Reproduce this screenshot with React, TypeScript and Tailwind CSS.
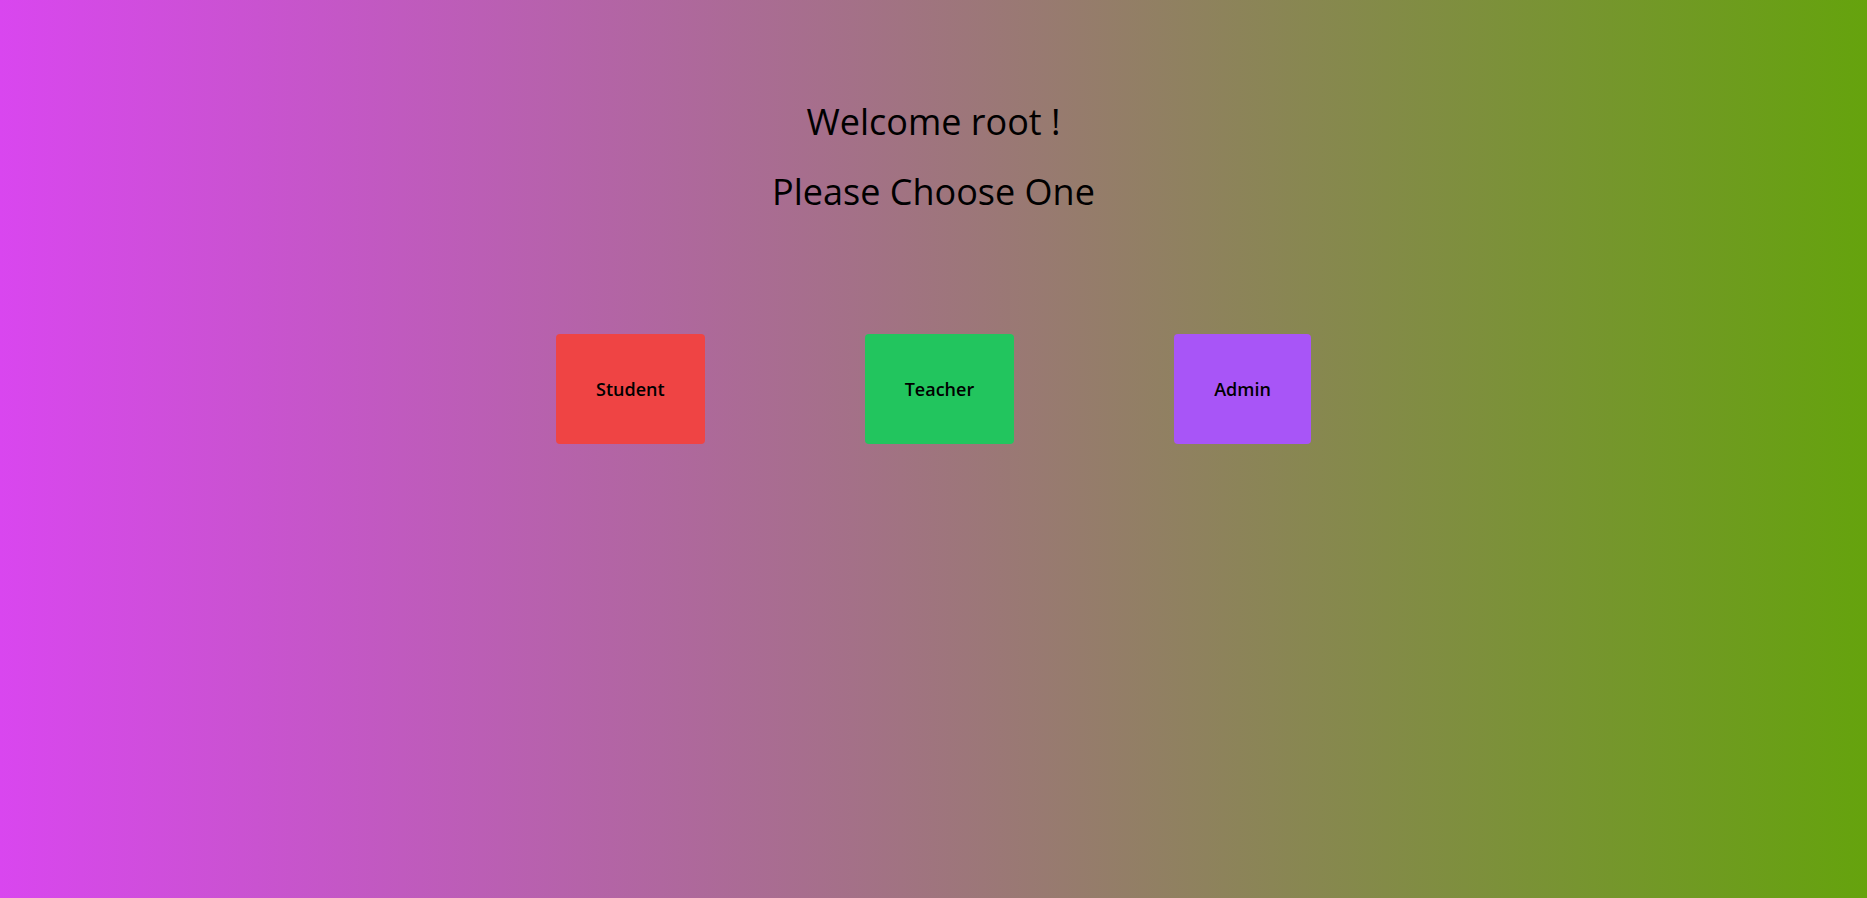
export default function App() {
  const roles = [
    { name: "Student", color: "bg-[#ef4444]" },
    { name: "Teacher", color: "bg-[#22c55e]" },
    { name: "Admin", color: "bg-[#a855f7]" },
  ];

  return (
    <div className="min-h-screen w-full bg-linear-to-r/srgb from-[#d946ef] to-[#65a30d] font-['Open_Sans',sans-serif] text-black">
      <div className="flex flex-col items-center pt-[102px]">
        <h1 className="text-[36px] leading-[40px]">Welcome root !</h1>
        <h2 className="mt-[30px] text-[36px] leading-[40px]">Please Choose One</h2>

        <div className="mt-[122px] flex gap-[160px]">
          {roles.map((r) => (
            <button
              key={r.name}
              type="button"
              className={`${r.color} rounded-[4px] px-10 py-[41px] text-[18px] font-semibold leading-[28px]`}
            >
              {r.name}
            </button>
          ))}
        </div>
      </div>
    </div>
  );
}
